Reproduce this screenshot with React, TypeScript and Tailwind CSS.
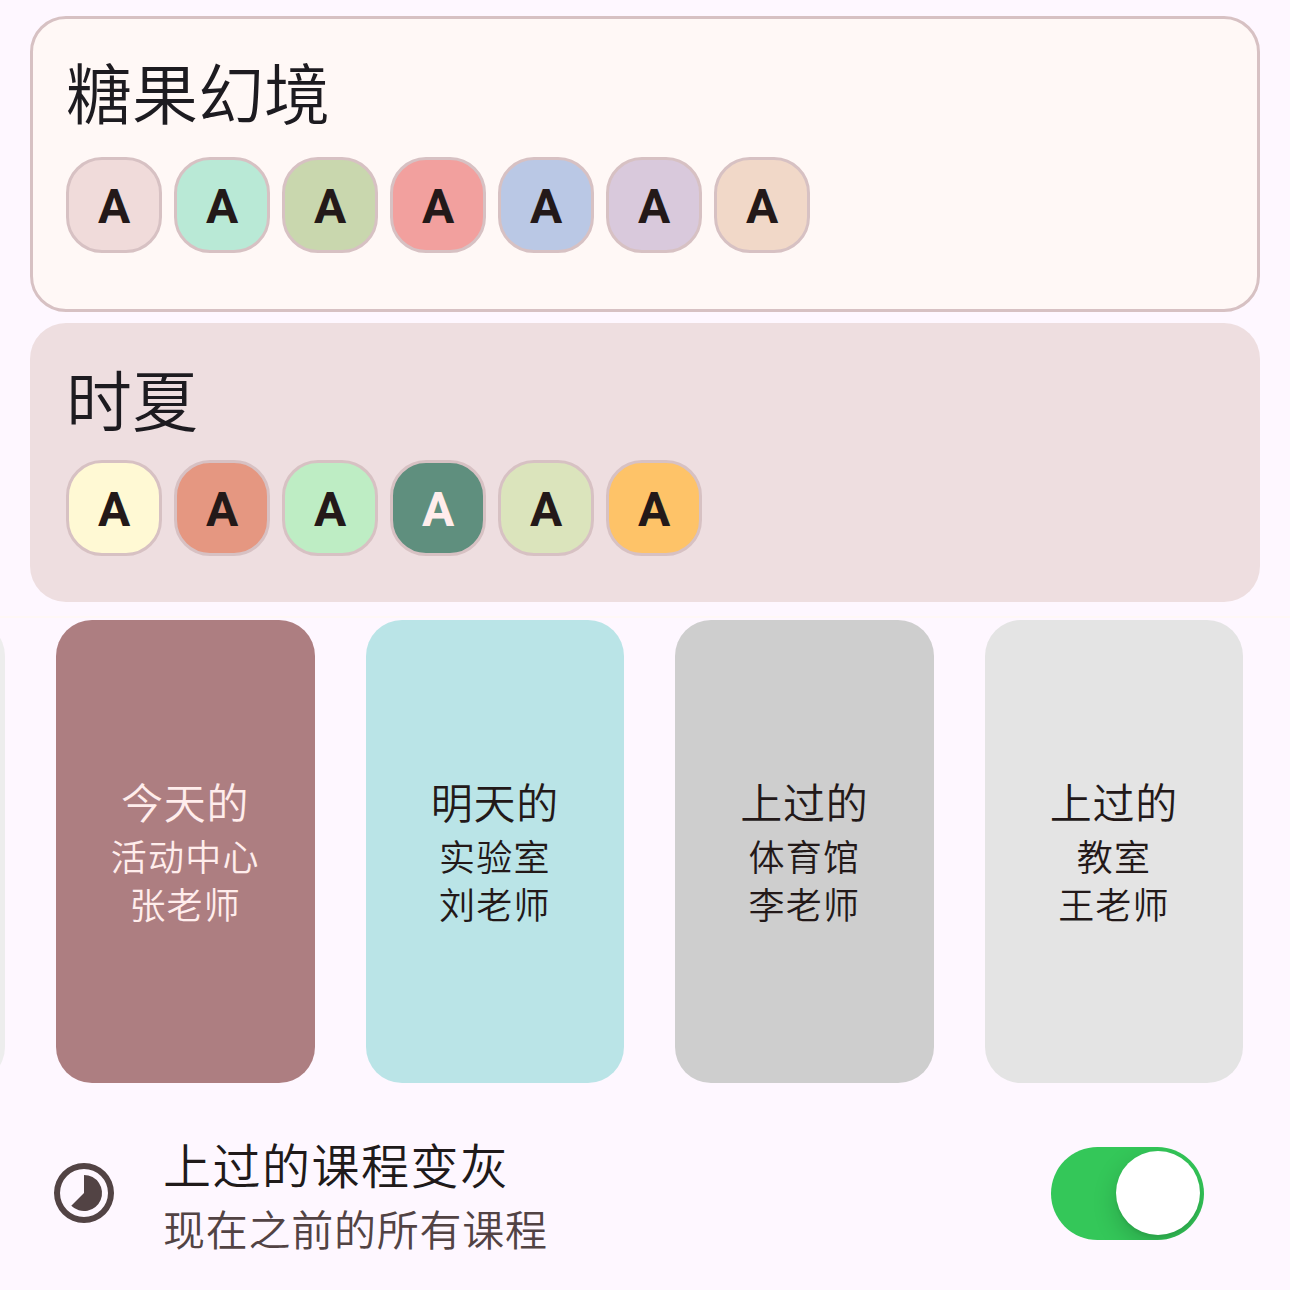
type Swatch = { fill: string; ink: string };

const dark = "text-[#231919]";
const light = "text-[#ffedec]";

const candy: Swatch[] = [
  { fill: "bg-[#f0dbda]", ink: dark },
  { fill: "bg-[#b9e9d6]", ink: dark },
  { fill: "bg-[#c9d7ae]", ink: dark },
  { fill: "bg-[#f2a09e]", ink: dark },
  { fill: "bg-[#bac8e5]", ink: dark },
  { fill: "bg-[#d9c9dc]", ink: dark },
  { fill: "bg-[#f1d8c8]", ink: dark },
];

const summer: Swatch[] = [
  { fill: "bg-[#fff9d4]", ink: dark },
  { fill: "bg-[#e59781]", ink: dark },
  { fill: "bg-[#beedc4]", ink: dark },
  { fill: "bg-[#5f8f7e]", ink: light },
  { fill: "bg-[#dbe4bc]", ink: dark },
  { fill: "bg-[#fec368]", ink: dark },
];

const lessons = [
  { name: "今天的", room: "活动中心", teacher: "张老师", style: "bg-[#ad7e81] text-[#ffedec]" },
  { name: "明天的", room: "实验室", teacher: "刘老师", style: "bg-[#bae4e7] text-[#231919]" },
  { name: "上过的", room: "体育馆", teacher: "李老师", style: "bg-[#cecece] text-[#231919]" },
  { name: "上过的", room: "教室", teacher: "王老师", style: "bg-[#e4e4e4] text-[#231919]" },
];

function Swatches({ items }: { items: Swatch[] }) {
  return (
    <div className="flex gap-3">
      {items.map((s, i) => (
        <div
          key={i}
          className={`flex size-24 items-center justify-center rounded-[36px] border-[3px] border-[#d7c1c3] font-[Roboto,sans-serif] text-5xl leading-none font-bold ${s.fill} ${s.ink}`}
        >
          <span className="pt-[3px]">A</span>
        </div>
      ))}
    </div>
  );
}

export default function App() {
  return (
    <main className="flex h-[1290px] w-[1290px] flex-col overflow-hidden bg-[#fef7ff] pt-4 font-['Noto_Sans_CJK_SC',sans-serif] font-[350]">
      <section className="mx-[30px] h-[296px] shrink-0 rounded-[36px] border-[3px] border-[#d7c1c3] bg-[#fff8f6] px-[33px] pt-[33px]">
        <h2 className="mb-[9px] h-24 text-[66px] leading-[77px] text-[#1d1b20]">糖果幻境</h2>
        <Swatches items={candy} />
      </section>

      <section className="mx-[30px] mt-[11px] h-[279px] shrink-0 rounded-[36px] bg-[#eedee0] px-9 pt-9">
        <h2 className="mb-[5px] h-24 text-[66px] leading-[77px] text-[#1d1b20]">时夏</h2>
        <Swatches items={summer} />
      </section>

      <div className="mt-[14px] h-[2px] w-full shrink-0 bg-[#fff8f6]" />

      <div className="mt-[2.4px] flex h-[463px] shrink-0 gap-[51px]">
        <div className="-ml-[253.7px] w-[258.6px] shrink-0 rounded-[36px] bg-[#ededed]" />
        {lessons.map((l) => (
          <article
            key={l.room}
            className={`flex w-[258.6px] shrink-0 flex-col items-center justify-center rounded-[36px] ${l.style}`}
          >
            <div className="h-[54px] text-[42px] leading-[48px] tracking-[0.75px]">{l.name}</div>
            <div className="h-12 text-4xl leading-[48px] tracking-[1.2px]">{l.room}</div>
            <div className="h-12 text-4xl leading-[48px] tracking-[1.2px]">{l.teacher}</div>
          </article>
        ))}
      </div>

      <div className="mt-[55.6px] flex h-[120px] shrink-0 items-center pr-[86px] pl-12">
        <svg viewBox="0 0 24 24" className="mt-[-11px] size-[72px] fill-[#524344]">
          <path d="M12 2a10 10 0 1 0 0 20 10 10 0 0 0 0-20Zm0 18a8 8 0 1 1 0-16 8 8 0 0 1 0 16Z" />
          <path d="M12 12V6a6 6 0 1 1-4.24 10.24Z" />
        </svg>
        <div className="-mt-2 ml-[43px] flex-1">
          <div className="h-[66px] text-5xl leading-[62px] tracking-[1.5px] text-[#201a1a]">上过的课程变灰</div>
          <div className="h-[60px] text-[42px] leading-[60px] tracking-[0.75px] text-[#524344]">现在之前的所有课程</div>
        </div>
        <div className="mt-[-11px] flex h-[93px] w-[153px] items-center justify-end overflow-hidden rounded-full bg-[#34c759] pr-[4px]">
          <div className="size-[84px] rounded-full bg-white shadow-[0_9px_24px_rgba(0,0,0,0.18),0_3px_3px_rgba(0,0,0,0.06)]" />
        </div>
      </div>
    </main>
  );
}
